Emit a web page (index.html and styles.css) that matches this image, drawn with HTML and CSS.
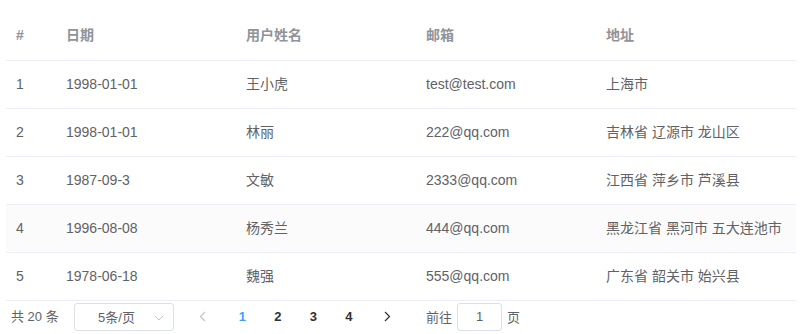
FILE: index.html
```html
<!DOCTYPE html>
<html lang="zh-CN">
<head>
<meta charset="utf-8">
<title>表格</title>
<link rel="stylesheet" href="styles.css">
</head>
<body>
<div class="wrap">
  <table class="tbl">
    <colgroup>
      <col class="c1"><col class="c2"><col class="c3"><col class="c4"><col class="c5">
    </colgroup>
    <thead>
      <tr><th>#</th><th>日期</th><th>用户姓名</th><th>邮箱</th><th>地址</th></tr>
    </thead>
    <tbody>
      <tr><td>1</td><td>1998-01-01</td><td>王小虎</td><td>test@test.com</td><td>上海市</td></tr>
      <tr><td>2</td><td>1998-01-01</td><td>林丽</td><td>222@qq.com</td><td>吉林省 辽源市 龙山区</td></tr>
      <tr><td>3</td><td>1987-09-3</td><td>文敏</td><td>2333@qq.com</td><td>江西省 萍乡市 芦溪县</td></tr>
      <tr class="stripe"><td>4</td><td>1996-08-08</td><td>杨秀兰</td><td>444@qq.com</td><td>黑龙江省 黑河市 五大连池市</td></tr>
      <tr><td>5</td><td>1978-06-18</td><td>魏强</td><td>555@qq.com</td><td>广东省 韶关市 始兴县</td></tr>
    </tbody>
  </table>
  <div class="pager">
    <span class="total">共 20 条</span>
    <div class="sizes">
      <span class="sizes-text">5条/页</span>
      <svg class="sizes-arrow" width="10" height="6" viewBox="0 0 10 6"><path d="M1 1 L5 5 L9 1" fill="none" stroke="#c0c4cc" stroke-width="1"/></svg>
    </div>
    <button class="btn prev" type="button"><svg width="7" height="11" viewBox="0 0 7 11"><path d="M6 1 L1.5 5.5 L6 10" fill="none" stroke="#c0c4cc" stroke-width="1.2"/></svg></button>
    <ul class="nums">
      <li class="active">1</li><li>2</li><li>3</li><li>4</li>
    </ul>
    <button class="btn next" type="button"><svg width="7" height="11" viewBox="0 0 7 11"><path d="M1 1 L5.5 5.5 L1 10" fill="none" stroke="#303133" stroke-width="1.2"/></svg></button>
    <span class="jumper">前往<span class="jump-input">1</span>页</span>
  </div>
</div>
</body>
</html>
```
FILE: styles.css
```css
* { box-sizing: border-box; }
body {
  margin: 0;
  background: #fff;
  font-family: "Liberation Sans", Arial, "Noto Sans CJK SC", sans-serif;
}
.wrap {
  padding: 12px 0 0 6px;
  width: 796px;
}
.tbl {
  width: 790px;
  border-collapse: collapse;
  table-layout: fixed;
  font-size: 14px;
}
.c1 { width: 50px; }
.c2 { width: 180px; }
.c3 { width: 180px; }
.c4 { width: 180px; }
.c5 { width: 200px; }
.tbl th, .tbl td {
  text-align: left;
  padding: 12px 10px;
  line-height: 23px;
  height: 48px;
  border-bottom: 1px solid #ebeef5;
  white-space: nowrap;
  overflow: hidden;
}
.tbl th {
  color: #909399;
  font-weight: bold;
}
.tbl td { color: #606266; }
.tbl tr.stripe td { background: #fbfbfb; }

.pager {
  display: flex;
  align-items: center;
  height: 32px;
  padding: 2px 5px;
  font-size: 13px;
  color: #606266;
}
.total {
  width: 63px;
  line-height: 28px;
}
.sizes {
  width: 100px;
  height: 28px;
  border: 1px solid #dcdfe6;
  border-radius: 3px;
  display: flex;
  align-items: center;
  position: relative;
  padding: 0 25px 0 10px;
}
.sizes-text {
  flex: 1;
  text-align: center;
  color: #606266;
}
.sizes-arrow {
  position: absolute;
  right: 9px;
  top: 11px;
}
.btn {
  width: 35.5px;
  height: 28px;
  border: 0;
  background: transparent;
  padding: 0;
  display: flex;
  align-items: center;
  justify-content: center;
}
.prev { margin-left: 11px; }
.next { margin-left: 3px; }
.nums {
  display: flex;
  list-style: none;
  margin: 0;
  padding: 0 0 0 4px;
}
.nums li {
  width: 35.5px;
  height: 28px;
  line-height: 28px;
  text-align: center;
  font-weight: bold;
  color: #303133;
}
.nums li.active { color: #409eff; }
.jumper {
  margin-left: 21px;
  display: flex;
  align-items: center;
  color: #606266;
}
.jump-input {
  width: 45px;
  height: 28px;
  margin: 0 5px 0 5px;
  border: 1px solid #dcdfe6;
  border-radius: 3px;
  line-height: 26px;
  text-align: center;
  color: #606266;
}
```
